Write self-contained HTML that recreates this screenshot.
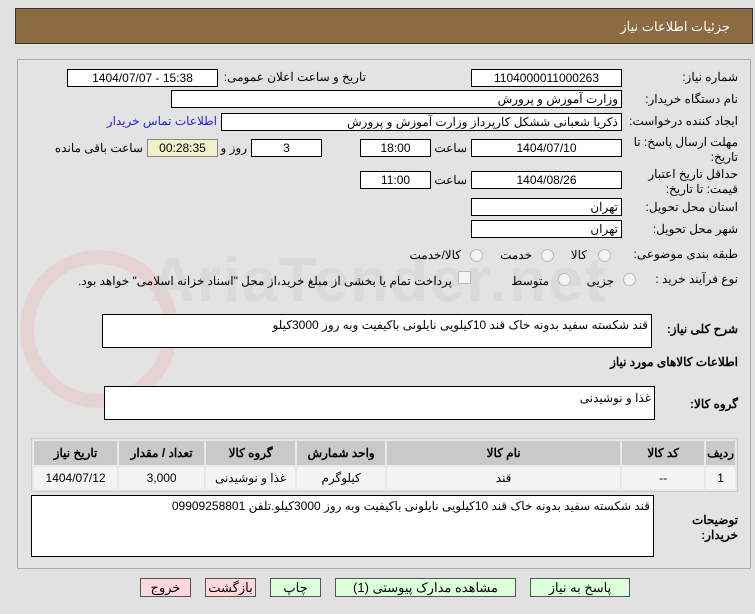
<!DOCTYPE html>
<html><head><meta charset="utf-8"><style>
body{margin:0;width:755px;height:614px;background:#e1e1e1;font-family:"Liberation Sans","Noto Sans CJK SC",sans-serif;font-size:12px;color:#000;position:relative;overflow:hidden}
.a{position:absolute}
.hdr{left:15px;top:8px;width:736px;height:34px;background:#8c6b41;border:1px solid #333}
.hdr span{position:absolute;right:22px;top:10px;color:#fff;font-size:13px}
.panel{left:17px;top:59px;width:732px;height:508px;border:1px solid #aaa;background:#e3e3e3}
.in{position:absolute;background:#fff;border:1px solid #000;height:16px;line-height:16px;font-size:12px;box-sizing:content-box;direction:rtl}
.c{text-align:center}.r{text-align:right;padding-right:3px}
.l{position:absolute;white-space:nowrap;direction:rtl;font-size:12px}
.b{font-weight:bold}
table{direction:rtl;border-collapse:separate;border-spacing:2px;position:absolute;left:31px;top:438px;width:707px;background:#e8e8e8;border:1px solid #ccc}
th{background:#c9c9c9;height:22px;font-size:12px}
td{background:#f4f4f4;height:20px;text-align:center;font-size:12px}
.btn{position:absolute;top:578px;height:17px;border:1px solid #555;background:#dcffdc;text-align:center;line-height:17px;font-size:13px}
.pk{background:#ffd8dc}
.rad{position:absolute;width:11px;height:11px;border:1px solid #bbb;border-radius:50%;background:#f4f4f4}
</style></head><body>
<div class="a hdr"><span>جزئیات اطلاعات نیاز</span></div>
<div class="a panel"></div>
<div class="a" style="left:20px;top:250px;width:130px;height:130px;border:14px solid #e8c4c4;border-radius:50%;opacity:.5"></div>
<div class="a" style="left:150px;top:245px;font-size:62px;font-weight:bold;color:#d2d2d2;opacity:.5;letter-spacing:2px">AriaTender.net</div>

<div class="l" style="right:17px;top:70px">شماره نیاز:</div>
<div class="in c" style="left:471px;top:69px;width:149px">1104000011000263</div>
<div class="l" style="right:389px;top:70px">تاریخ و ساعت اعلان عمومی:</div>
<div class="a" style="left:67px;top:69px;width:149px;height:16px;line-height:16px;background:#fff;border:1px solid #000;text-align:center;direction:ltr"><span style="display:inline-block">1404/07/07</span> <span style="display:inline-block">-</span> <span style="display:inline-block">15:38</span></div>

<div class="l" style="right:17px;top:92px">نام دستگاه خریدار:</div>
<div class="in r" style="left:171px;top:90px;width:446px">وزارت آموزش و پرورش</div>

<div class="l" style="right:17px;top:114px">ایجاد کننده درخواست:</div>
<div class="in r" style="left:221px;top:113px;width:396px">ذکریا شعبانی ششکل کارپرداز وزارت آموزش و پرورش</div>
<div class="l" style="right:538px;top:114px;color:#2222dd">اطلاعات تماس خریدار</div>

<div class="l" style="right:17px;top:135px;line-height:15px;text-align:right">مهلت ارسال پاسخ: تا<br>تاریخ:</div>
<div class="in c" style="left:471px;top:139px;width:149px">1404/07/10</div>
<div class="l" style="right:288px;top:141px">ساعت</div>
<div class="in c" style="left:360px;top:139px;width:69px">18:00</div>
<div class="in c" style="left:251px;top:139px;width:69px">3</div>
<div class="l" style="right:508px;top:141px">روز و</div>
<div class="in c" style="left:147px;top:139px;width:69px;background:#f2f2ca;border-color:#888">00:28:35</div>
<div class="l" style="right:612px;top:141px">ساعت باقی مانده</div>

<div class="l" style="right:17px;top:167px;line-height:15px;text-align:right">حداقل تاریخ اعتبار<br>قیمت: تا تاریخ:</div>
<div class="in c" style="left:471px;top:171px;width:149px">1404/08/26</div>
<div class="l" style="right:288px;top:173px">ساعت</div>
<div class="in c" style="left:360px;top:171px;width:69px">11:00</div>

<div class="l" style="right:17px;top:200px">استان محل تحویل:</div>
<div class="in r" style="left:471px;top:198px;width:146px">تهران</div>
<div class="l" style="right:17px;top:222px">شهر محل تحویل:</div>
<div class="in r" style="left:471px;top:220px;width:146px">تهران</div>

<div class="l" style="right:17px;top:247px">طبقه بندی موضوعی:</div>
<div class="rad" style="left:598px;top:249px"></div><div class="l" style="right:168px;top:248px">کالا</div>
<div class="rad" style="left:541px;top:249px"></div><div class="l" style="right:223px;top:248px">خدمت</div>
<div class="rad" style="left:470px;top:249px"></div><div class="l" style="right:294px;top:248px">کالا/خدمت</div>

<div class="l" style="right:17px;top:272px">نوع فرآیند خرید :</div>
<div class="rad" style="left:623px;top:273px"></div><div class="l" style="right:141px;top:274px">جزیی</div>
<div class="rad" style="left:558px;top:273px"></div><div class="l" style="right:206px;top:274px">متوسط</div>
<div class="a" style="left:458px;top:271px;width:11px;height:11px;border:1px solid #bbb;background:#f4f4f4"></div>
<div class="l" style="right:303px;top:274px">پرداخت تمام یا بخشی از مبلغ خرید،از محل "اسناد خزانه اسلامی" خواهد بود.</div>

<div class="l b" style="right:17px;top:322px">شرح کلی نیاز:</div>
<div class="in r" style="left:102px;top:314px;width:545px;height:32px;line-height:20px">قند شکسته  سفید بدونه خاک قند 10کیلویی نایلونی باکیفیت وبه روز 3000کیلو</div>
<div class="l b" style="right:17px;top:355px">اطلاعات کالاهای مورد نیاز</div>
<div class="l b" style="right:17px;top:397px">گروه کالا:</div>
<div class="in r" style="left:104px;top:386px;width:546px;height:32px;line-height:22px">غذا و نوشیدنی</div>

<table><tr><th style="width:26px">ردیف</th><th style="width:80px">کد کالا</th><th style="width:231px">نام کالا</th><th style="width:86px">واحد شمارش</th><th style="width:87px">گروه کالا</th><th style="width:83px">تعداد / مقدار</th><th>تاریخ نیاز</th></tr>
<tr><td>1</td><td>--</td><td>قند</td><td>کیلوگرم</td><td>غذا و نوشیدنی</td><td>3,000</td><td>1404/07/12</td></tr></table>

<div class="l b" style="right:17px;top:513px;line-height:15px;text-align:right">توضیحات<br>خریدار:</div>
<div class="in r" style="left:31px;top:495px;width:618px;height:60px;line-height:20px">قند شکسته  سفید بدونه خاک قند 10کیلویی نایلونی باکیفیت وبه روز 3000کیلو.تلفن 09909258801</div>

<div class="btn" style="left:530px;width:98px">پاسخ به نیاز</div>
<div class="btn" style="left:335px;width:179px">مشاهده مدارک پیوستی (1)</div>
<div class="btn" style="left:270px;width:49px">چاپ</div>
<div class="btn pk" style="left:205px;width:49px">بازگشت</div>
<div class="btn pk" style="left:140px;width:49px">خروج</div>
</body></html>
